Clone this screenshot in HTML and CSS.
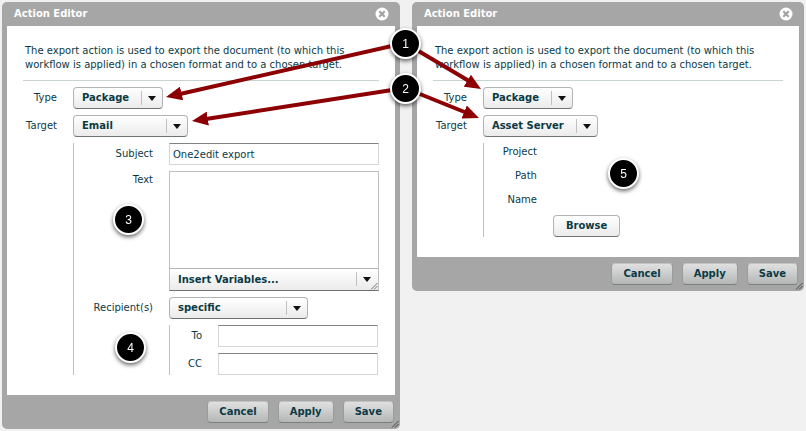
FILE: index.html
```html
<!DOCTYPE html>
<html lang="en">
<head>
    <meta charset="UTF-8">
    <meta name="viewport" content="width=device-width, initial-scale=1.0">
    <title>Action Editor</title>
    <link rel="stylesheet" href="styles.css">
</head>
<body>
    <main class="workspace">
        <!-- Export by email -->
        <form class="dialog dialog-email">
            <header class="dialog-header">
                <h1>Action Editor</h1>
                <button type="button" class="close" aria-label="Close">
                    <svg width="14" height="14" viewBox="0 0 14 14">
                        <circle cx="7" cy="7" r="6.5" fill="#fff"/>
                        <path d="M4.3 4.3l5.4 5.4M9.7 4.3l-5.4 5.4" stroke="#a0a0a0" stroke-width="2"/>
                    </svg>
                </button>
            </header>
            <div class="dialog-body">
                <p class="intro">The export action is used to export the document (to which this workflow is applied) in a chosen format and to a chosen target.</p>
                <div class="fields">
                    <label for="type1">Type</label>
                    <span class="picker picker-small"><select id="type1"><option>Package</option></select></span>
                    <label for="target1">Target</label>
                    <span class="picker picker-medium"><select id="target1"><option>Email</option></select></span>
                    <div class="group group-email">
                        <label for="subject">Subject</label>
                        <input type="text" id="subject" value="One2edit export">
                        <label for="text" class="label-top">Text</label>
                        <div class="editor">
                            <textarea id="text"></textarea>
                            <span class="picker picker-bar"><select aria-label="Variables"><option>Insert Variables...</option></select></span>
                            <svg class="grip" width="8" height="8" viewBox="0 0 8 8"><path d="M1 7.5L7.5 1M4 7.5L7.5 4" stroke="#777" fill="none"/></svg>
                        </div>
                        <label for="recipients">Recipient(s)</label>
                        <span class="picker picker-large"><select id="recipients"><option>specific</option></select></span>
                        <div class="group group-address">
                            <label for="to">To</label>
                            <input type="text" id="to">
                            <label for="cc">CC</label>
                            <input type="text" id="cc">
                        </div>
                    </div>
                </div>
            </div>
            <footer class="dialog-footer">
                <button type="button">Cancel</button>
                <button type="button">Apply</button>
                <button type="button">Save</button>
            </footer>
            <svg class="grip" width="8" height="8" viewBox="0 0 8 8"><path d="M1 7.5L7.5 1M4 7.5L7.5 4" stroke="#444" fill="none"/></svg>
        </form>

        <!-- Export to asset server -->
        <form class="dialog dialog-server">
            <header class="dialog-header">
                <h1>Action Editor</h1>
                <button type="button" class="close" aria-label="Close">
                    <svg width="14" height="14" viewBox="0 0 14 14">
                        <circle cx="7" cy="7" r="6.5" fill="#fff"/>
                        <path d="M4.3 4.3l5.4 5.4M9.7 4.3l-5.4 5.4" stroke="#a0a0a0" stroke-width="2"/>
                    </svg>
                </button>
            </header>
            <div class="dialog-body">
                <p class="intro">The export action is used to export the document (to which this workflow is applied) in a chosen format and to a chosen target.</p>
                <div class="fields">
                    <label for="type2">Type</label>
                    <span class="picker picker-small"><select id="type2"><option>Package</option></select></span>
                    <label for="target2">Target</label>
                    <span class="picker picker-medium"><select id="target2"><option>Asset Server</option></select></span>
                    <div class="group group-server">
                        <span class="name">Project</span>
                        <span class="value"></span>
                        <span class="name">Path</span>
                        <span class="value"></span>
                        <span class="name">Name</span>
                        <span class="value"></span>
                        <button type="button" class="browse">Browse</button>
                    </div>
                </div>
            </div>
            <footer class="dialog-footer">
                <button type="button">Cancel</button>
                <button type="button">Apply</button>
                <button type="button">Save</button>
            </footer>
            <svg class="grip" width="8" height="8" viewBox="0 0 8 8"><path d="M1 7.5L7.5 1M4 7.5L7.5 4" stroke="#444" fill="none"/></svg>
        </form>
    </main>

    <!-- Numbered callouts and arrows -->
    <svg class="callouts" width="806" height="431" viewBox="0 0 806 431">
        <defs>
            <marker id="head" markerUnits="userSpaceOnUse" markerWidth="17" markerHeight="14" refX="16" refY="7" orient="auto">
                <path d="M0 0L16 7L0 14z" fill="#8c0004"/>
            </marker>
        </defs>
        <g class="arrows">
            <path d="M405 43L180 94"/>
            <path d="M405 43L469 81"/>
            <path d="M405 88L206 119"/>
            <path d="M405 88L467 113"/>
        </g>
        <g class="heads">
            <path d="M405 43L166 97" marker-end="url(#head)"/>
            <path d="M405 43L481 89" marker-end="url(#head)"/>
            <path d="M405 88L192 121" marker-end="url(#head)"/>
            <path d="M405 88L479 118" marker-end="url(#head)"/>
        </g>
        <g class="badge"><circle cx="405.5" cy="43.5" r="14.5"/><text x="405.5" y="48">1</text></g>
        <g class="badge"><circle cx="405.5" cy="88.5" r="14.5"/><text x="405.5" y="93">2</text></g>
        <g class="badge"><circle cx="128.5" cy="219.5" r="14.5"/><text x="128.5" y="224">3</text></g>
        <g class="badge"><circle cx="130.5" cy="347.5" r="14.5"/><text x="130.5" y="352">4</text></g>
        <g class="badge"><circle cx="623.5" cy="173.5" r="14.5"/><text x="623.5" y="178">5</text></g>
    </svg>
</body>
</html>
```

FILE: styles.css
```css
* {
    box-sizing: border-box;
}

body {
    position: relative;
    margin: 0;
    background: #f1f1f1;
    color: #0b3a45;
    font: 10px/14px "DejaVu Sans", Verdana, sans-serif;
}

button, input, select, textarea {
    margin: 0;
    color: inherit;
    font: inherit;
}

.workspace {
    display: flex;
    align-items: flex-start;
    gap: 12px;
    padding: 2px;
}

/* Dialogs */
.dialog {
    position: relative;
    padding: 0 5px;
    background: #a6a6a6;
    border-radius: 5px;
}

.dialog-email {
    flex: 398 1 0;
}

.dialog-server {
    flex: 392 1 0;
}

.dialog-header {
    display: flex;
    align-items: center;
    justify-content: space-between;
    height: 24px;
    padding: 0 6px 0 7px;
    color: #fff;
}

.dialog-header h1 {
    margin: 0;
    font-size: 10px;
}

.close {
    display: flex;
    padding: 0;
    background: none;
    border: 0;
}

.dialog-body {
    padding: 18px 16px 20px;
    background: #fff;
}

.intro {
    margin: 0 0 6px;
    padding: 0 2px 8px;
    border-bottom: 1px solid #c8d3d2;
}

.dialog-footer {
    display: flex;
    justify-content: flex-end;
    gap: 9px;
    padding: 6px 1px;
}

.dialog-footer button, .browse {
    height: 22px;
    padding: 0 12px;
    background: linear-gradient(#fff, #ebebeb);
    border: 1px solid #b2b4b4;
    border-bottom-color: #6e7474;
    border-radius: 4px;
    font-weight: bold;
}

.dialog-footer button {
    padding: 0 11px;
    background: linear-gradient(#e0e0e0, #b4b7b6);
    border-color: #c2c2c2 #9a9c9c #7c7f7f;
}

.grip {
    position: absolute;
    right: 1px;
    bottom: 1px;
}

/* Form fields */
.fields, .group {
    display: grid;
    column-gap: 16px;
    row-gap: 6px;
}

.fields {
    grid-template-columns: 34px 1fr;
}

.fields label, .name {
    padding-top: 4px;
    text-align: right;
}

.fields .label-top {
    padding-top: 2px;
}

.group {
    border-left: 1px solid #bfc1c1;
}

.group-email {
    grid-column: 2;
    grid-template-columns: 79px 1fr;
}

.group-address {
    grid-column: 2;
    grid-template-columns: 32px 1fr;
    padding-right: 1px;
}

.group-server {
    grid-column: 2;
    grid-template-columns: 53px 1fr;
}

.name {
    height: 18px;
    padding-top: 2px;
}

.browse {
    grid-column: 2;
    justify-self: start;
}

input {
    width: 100%;
    height: 22px;
    padding: 0 3px;
    background: #fff;
    border: 1px solid #d5d7d7;
    border-top-color: #808484;
}

.editor {
    position: relative;
    border: 1px solid #bfc1c1;
    border-bottom-color: #6e7474;
}

textarea {
    display: block;
    width: 100%;
    height: 96px;
    padding: 3px;
    background: #fff;
    border: 0;
    resize: none;
}

.editor .grip {
    right: 0;
    bottom: 0;
}

/* Drop-downs */
.picker {
    position: relative;
    height: 22px;
}

.picker::before {
    content: "";
    position: absolute;
    top: 4px;
    right: 21px;
    z-index: 1;
    width: 1px;
    height: 14px;
    background: #bfc1c1;
}

.picker::after {
    content: "";
    position: absolute;
    top: 9px;
    right: 7px;
    z-index: 1;
    border: solid transparent;
    border-width: 5px 4px 0;
    border-top-color: #111;
    pointer-events: none;
}

.picker select {
    width: 100%;
    height: 22px;
    padding: 0 22px 0 8px;
    appearance: none;
    background: linear-gradient(#fff, #ebebeb);
    border: 1px solid #b2b4b4;
    border-bottom-color: #6e7474;
    border-radius: 4px;
    font-weight: bold;
}

.picker-small {
    width: 90px;
}

.picker-medium {
    width: 115px;
}

.picker-large {
    width: 139px;
}

.picker-bar {
    display: block;
}

.picker-bar select {
    border-width: 1px 0 0;
    border-radius: 0;
}

/* Callouts */
.callouts {
    position: absolute;
    top: 0;
    left: 0;
    z-index: 2;
    pointer-events: none;
}

.arrows {
    stroke: #8c0004;
    stroke-width: 4;
}

.heads {
    stroke: none;
}

.badge {
    filter: drop-shadow(0 2px 2px rgba(0, 0, 0, 0.6));
}

.badge circle {
    fill: #000;
    stroke: #fff;
    stroke-width: 2;
}

.badge text {
    fill: #fff;
    font: 12px "Liberation Sans", Arial, sans-serif;
    text-anchor: middle;
}
```
